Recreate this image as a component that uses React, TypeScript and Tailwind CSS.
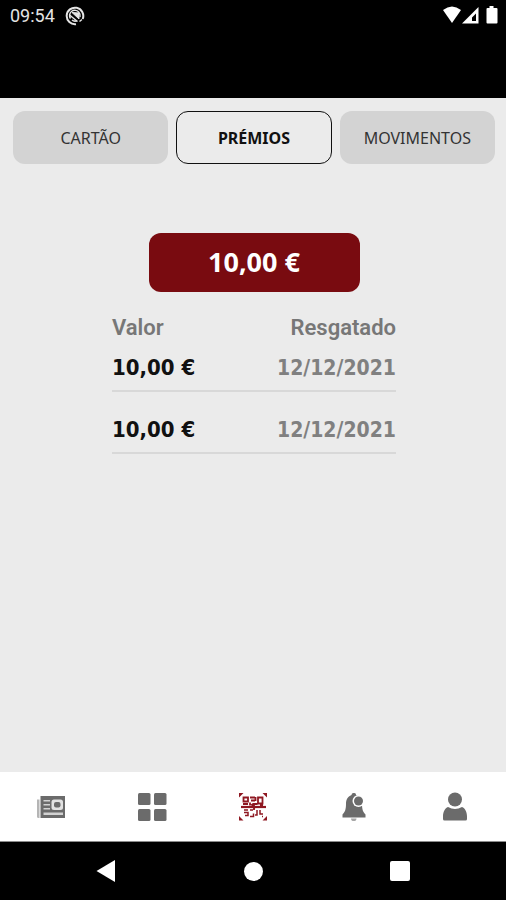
import type { ReactNode } from "react";

const tabs = ["CARTÃO", "PRÉMIOS", "MOVIMENTOS"];

const prizes = [
  { value: "10,00 €", date: "12/12/2021" },
  { value: "10,00 €", date: "12/12/2021" },
];

function StatusBar() {
  return (
    <header className="flex h-[98px] items-start justify-between bg-black pt-1 pr-2 pl-[10px] text-[#e4e4e4]">
      <div className="flex h-6 items-center gap-[10px]">
        <span className="font-['Roboto',sans-serif] text-[18px] leading-6">09:54</span>
        <svg className="size-5" viewBox="0 0 20 20" fill="none" stroke="currentColor">
          <path d="M11 18.200A8.300 8.300 0 1 1 17.700 13" strokeWidth="2" />
          <path d="M5.500 12.500A5 5 0 0 1 14 6.500a5 5 0 0 1 1 4.500M7 14a5 5 0 0 0 5 .7" strokeWidth="1.500" />
          <path d="M7 6.500l7 .5v6z" fill="currentColor" strokeWidth="1" />
          <path d="M4.500 9l8 6.500M14.500 15.500l2.500-2" strokeWidth="1.500" />
        </svg>
      </div>
      <svg className="h-6 w-[55px]" viewBox="0 0 55 24" fill="#fff">
        <path d="M0 6Q9-1 18 6L9 19z" />
        <path fillRule="evenodd" d="M19 19.500L35.500 3v16.500zM29 17h4V9.500l-4 4z" />
        <path d="M46.500 2h4v2h3a1 1 0 0 1 1 1v13.500a1 1 0 0 1-1 1h-9a1 1 0 0 1-1-1V5a1 1 0 0 1 1-1h2z" />
      </svg>
    </header>
  );
}

function NavItem({ label, children }: { label: string; children: ReactNode }) {
  return (
    <button type="button" aria-label={label} className="flex flex-1 items-center justify-center text-[#6b6b6b]">
      {children}
    </button>
  );
}

function BottomNav() {
  return (
    <nav className="flex h-[70px] border-b border-[#8c8c8c] bg-white">
      <NavItem label="Notícias">
        <svg className="size-[30px]" viewBox="0 0 30 30" fill="currentColor">
          <path d="M1 7.500h2.500V26H2.500A1.500 1.500 0 0 1 1 24.500z" opacity=".5" />
          <path d="M4.500 4H29v22H4.500z" />
          <path d="M7.500 8h6.500v1.500H7.500zM7.500 12h6.500v1.500H7.500zM7.500 16h6.500v1.500H7.500zM7.500 20.500H27V23H7.500z" fill="#d2d2d2" />
          <rect x="15.500" y="7.500" width="11.500" height="10.500" rx="2.500" fill="#e2e2e2" />
          <rect x="18" y="10" width="6.500" height="5.500" rx="2" />
        </svg>
      </NavItem>
      <NavItem label="Menu">
        <svg className="size-[30px]" viewBox="0 0 30 30" fill="currentColor">
          <rect x="1" y="1" width="12.500" height="12" rx="1.500" />
          <rect x="17" y="1" width="12.500" height="12" rx="1.500" />
          <rect x="1" y="17" width="12.500" height="12" rx="1.500" />
          <rect x="17" y="17" width="12.500" height="12" rx="1.500" />
        </svg>
      </NavItem>
      <NavItem label="Ler código">
        <svg className="size-[30px]" viewBox="0 0 30 30" fill="none" stroke="#8f1822" strokeWidth="1.800">
          <path d="M1 1h4.500L1 5.500zM29 1h-4.500L29 5.500zM1 28.500h4.500L1 24zM29 28.500h-4.500L29 24z" fill="#8f1822" stroke="none" />
          <path d="M3 15h25" strokeWidth="2.200" />
          <path d="M5.500 5.500h4.500v4H5.500zM20 5.500h4.500v6H20zM12 5.500h5M13 8.500h4M17.500 5v4M5 12h5M12 10.500v3M14.500 12h5M22 13h3M16 13v5M13.500 12l3 5" />
          <path d="M6 18h4M6 20.500h4v3H7M12 18h3M12 24.500h3.500v-3M19 18v5h-2M22 18v4h3M24 24.500h1" strokeWidth="1.500" />
        </svg>
      </NavItem>
      <NavItem label="Notificações">
        <svg className="size-[30px]" viewBox="0 0 30 30" fill="currentColor">
          <path d="M14.500 1a2 2 0 0 0-2 2C8.500 4.500 7 8 7 12c0 5.500-1 8-3.500 10.500V25.500h23v-3c-2.500-2.500-3.500-5-3.500-10.500 0-4-2-7.500-6-9a2 2 0 0 0-2.500-2z" />
          <circle cx="19.500" cy="9" r="6" fill="#fff" />
          <circle cx="19.500" cy="9" r="4.500" />
          <path d="M12 26.500h5.500a2.700 2.500 0 0 1-5.500 0z" opacity=".6" />
        </svg>
      </NavItem>
      <NavItem label="Perfil">
        <svg className="size-[30px]" viewBox="0 0 30 30" fill="currentColor">
          <circle cx="15" cy="7.500" r="7" />
          <path d="M8 15q7 4 14 0c3 1 5 5 5 9.500V27q0 1.500-1.500 1.500h-21Q3 28.500 3 27v-2.500c0-4.500 2-8.500 5-9.500z" />
        </svg>
      </NavItem>
    </nav>
  );
}

function SystemBar() {
  return (
    <footer className="flex h-[58px] bg-black px-[33px]">
      <button type="button" aria-label="Voltar" className="flex flex-1 items-center justify-center">
        <svg className="size-[22px]" viewBox="0 0 22 22" fill="#fff"><path d="M1.500 11L20 0v22z" /></svg>
      </button>
      <button type="button" aria-label="Início" className="flex flex-1 items-center justify-center">
        <span className="size-[19px] rounded-full bg-white" />
      </button>
      <button type="button" aria-label="Recentes" className="flex flex-1 items-center justify-center">
        <span className="size-5 rounded-xs bg-white" />
      </button>
    </footer>
  );
}

export default function App() {
  return (
    <div className="flex min-h-screen flex-col bg-[#ebebeb]">
      <StatusBar />
      <main className="flex flex-1 flex-col items-center pt-[13px] pr-[11px] pl-[13px]">
        <div role="tablist" className="grid w-full grid-cols-3 gap-2">
          {tabs.map((tab) => {
            const active = tab === "PRÉMIOS";
            return (
              <button
                key={tab}
                type="button"
                role="tab"
                aria-selected={active}
                className={
                  "h-[53px] rounded-xl font-['Noto_Sans',sans-serif] text-base " +
                  (active
                    ? "border border-[#111] font-bold text-[#111]"
                    : "bg-[#d3d3d3] font-normal text-[#333]")
                }
              >
                {tab}
              </button>
            );
          })}
        </div>
        <button
          type="button"
          className="mt-[69px] h-[59px] w-[211px] rounded-xl bg-[#790b10] font-['Noto_Sans',sans-serif] text-[27px] font-bold text-white"
        >
          10,00 €
        </button>
        <table className="mt-5 w-[284px] border-collapse">
          <thead>
            <tr className="h-8 font-['Roboto',sans-serif] text-[22px] leading-8 text-[#777]">
              <th className="p-0 text-left font-semibold">Valor</th>
              <th className="p-0 text-right font-semibold">Resgatado</th>
            </tr>
          </thead>
          <tbody className="font-['DejaVu_Sans_Condensed','DejaVu_Sans',sans-serif] font-bold">
            {prizes.map((prize, i) => (
              <tr key={i} className="border-b-2 border-[#d8d8d8]">
                <td className={"p-0 pb-1.5 text-[22px] leading-8 text-[#111] " + (i ? "pt-[22px]" : "pt-2")}>{prize.value}</td>
                <td className={"p-0 pb-1.5 text-right text-[21px] leading-8 text-[#808080] " + (i ? "pt-[22px]" : "pt-2")}>{prize.date}</td>
              </tr>
            ))}
          </tbody>
        </table>
      </main>
      <BottomNav />
      <SystemBar />
    </div>
  );
}
